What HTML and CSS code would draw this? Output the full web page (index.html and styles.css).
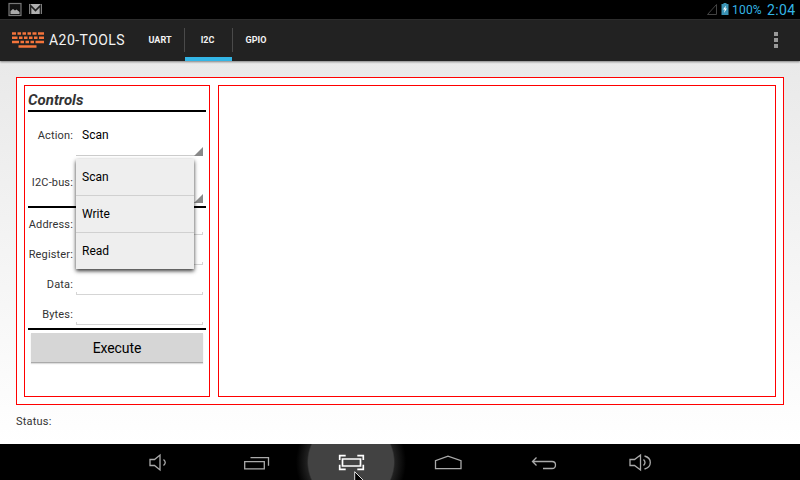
FILE: index.html
```html
<!DOCTYPE html>
<html lang="en">
<head>
<meta charset="utf-8">
<title>A20-TOOLS</title>
<link rel="stylesheet" href="styles.css">
</head>
<body>
<div class="screen">
  <header class="statusbar">
    <svg class="notif" width="44" height="19" viewBox="0 0 44 19">
      <rect x="2" y="3.500" width="12" height="12" fill="#111" stroke="#777" stroke-width="1.200"/>
      <path d="M3.500 14V11l2.500-2 2 1.500 1.500-1 3 2.500v2z" fill="#aaa"/>
      <rect x="22" y="4" width="13" height="10" fill="#b0b0b0"/>
      <path d="M23.500 14V5.500L28.500 10.500 33.500 5.500V14" fill="none" stroke="#222" stroke-width="1.700"/>
    </svg>
    <div class="sys">
      <svg width="24" height="19" viewBox="0 0 24 19">
        <path d="M1.500 14.500H10.500V4.500Z" fill="none" stroke="#444" stroke-width="1"/>
        <path d="M15.500 4h2V3h3v1h2v11h-7z" fill="#3a93b5"/>
        <path d="M20 5.500l-3 4h1.800l-.8 3.500 3-4.500h-1.700z" fill="#fff"/>
      </svg>
      <span class="battery">100%</span><span class="clock">2:04</span>
    </div>
  </header>
  <nav class="actionbar">
    <svg class="logo" width="32" height="17" viewBox="0 0 32 17">
      <g fill="none" stroke="#f4743b">
        <path stroke-width="2.500" d="M0 1.500H4M5.500 1.500H9M10.500 1.500H14M15.500 1.500H19M20.500 1.500H24.500M26 1.500H32"/>
        <path stroke-width="2.500" d="M0 5.700H5.500M7 5.700H10.500M12 5.700H15.500M17 5.700H20.500M22 5.700H25.500M27 5.700H32"/>
        <path stroke-width="2.500" d="M0 10H7M8.500 10H12M13.500 10H17M18.500 10H22M23.500 10H32"/>
        <path stroke-width="2.500" d="M6.500 14.500H24.500"/>
      </g>
    </svg>
    <span class="title">A20-TOOLS</span>
    <div class="tabs">
      <span class="tab">UART</span>
      <span class="tab active">I2C</span>
      <span class="tab">GPIO</span>
    </div>
    <div class="overflow"><i></i><i></i><i></i></div>
  </nav>
  <main class="content">
    <div class="frame">
      <section class="panel controls">
        <h1>Controls</h1>
        <div class="rule"></div>
        <div class="row tall">
          <label>Action:</label>
          <div class="spinner">Scan</div>
          <div class="menu">
            <div>Scan</div>
            <div>Write</div>
            <div>Read</div>
          </div>
        </div>
        <div class="row tall"><label>I2C-bus:</label><div class="spinner"></div></div>
        <div class="rule"></div>
        <div class="row"><label>Address:</label><div class="field"></div></div>
        <div class="row"><label>Register:</label><div class="field"></div></div>
        <div class="row"><label>Data:</label><div class="field"></div></div>
        <div class="row"><label>Bytes:</label><div class="field"></div></div>
        <div class="rule"></div>
        <button class="execute">Execute</button>
      </section>
      <section class="panel output"></section>
    </div>
    <div class="status">Status:</div>
  </main>
  <footer class="navbar">
    <div class="key"><svg width="40" height="36" viewBox="0 0 40 36"><path d="M10 15.500h4.500l5.500-4.500v15l-5.500-4.500H10zM23.500 15.500q3.500 3 0 6"/></svg></div>
    <div class="key"><svg width="40" height="36" viewBox="0 0 40 36"><path d="M8.700 17.700h19.600v7.100H8.700zM14.500 13.700h18v8"/></svg></div>
    <div class="key pressed"><svg width="40" height="36" viewBox="0 0 40 36"><path d="M10.500 15h18v7h-18zM7.700 16v-4.300h6M25.300 11.700h6V16M7.700 20.800v4.500h6M25.300 25.300h6v-4.500"/></svg></div>
    <div class="key"><svg width="40" height="36" viewBox="0 0 40 36"><path d="M7.500 24.700v-8l12.500-4.500 13 4.500v8z"/></svg></div>
    <div class="key"><svg width="40" height="36" viewBox="0 0 40 36"><path d="M12.500 13.500l-4 4 4 4M8.500 17.500h19.500q3.500 0 3.500 3.500t-3.500 3.500h-9"/></svg></div>
    <div class="key"><svg width="40" height="36" viewBox="0 0 40 36"><path d="M10 15.500h4.500l6-4.500v15l-6-4.500H10zM23.500 15.500q3 3 0 6M24.500 12q5.800 1.500 5.800 6.500t-5.800 6.500"/></svg></div>
  </footer>
  <svg class="pointer" width="13" height="9" viewBox="0 0 13 9"><path d="M.7 12V.7L12 12" fill="#000" stroke="#ddd" stroke-width="1"/></svg>
</div>
</body>
</html>
```
FILE: styles.css
```css
* { box-sizing: border-box; }
body { margin: 0; font-family: Roboto, "Liberation Sans", sans-serif; }
.screen {
  position: relative;
  width: 800px;
  height: 480px;
  display: flex;
  flex-direction: column;
  overflow: hidden;
}
svg { display: block; flex: none; }

.statusbar {
  height: 19px;
  background: #000;
  display: flex;
  justify-content: space-between;
  padding: 0 5px 0 7px;
}
.sys { display: flex; color: #33b5e5; line-height: 20px; }
.battery { font-size: 12px; width: 35px; margin-left: 2px; letter-spacing: .2px; }
.clock { font-size: 14px; width: 28px; letter-spacing: .4px; }

.actionbar {
  position: relative;
  height: 42px;
  background: #222;
  border-top: 1px solid #2d2d2d;
  box-shadow: 0 1px 2px rgba(0, 0, 0, .45);
  display: flex;
  align-items: center;
  padding: 0 21px 0 12px;
  color: #f3f3f3;
}
.title { font-size: 14px; width: 88px; margin-left: 5px; margin-top: -1px; letter-spacing: .45px; }
.tabs { display: flex; align-self: stretch; }
.tab {
  position: relative;
  width: 48px;
  display: flex;
  align-items: center;
  justify-content: center;
  padding: 0 2px 2px 0;
  font-size: 9px;
  font-weight: 700;
}
.tab + .tab::before {
  content: "";
  position: absolute;
  left: -1px;
  top: 8px;
  width: 1px;
  height: 24px;
  background: #4a4a4a;
}
.tab.active { box-shadow: inset 0 -4px #33b5e5; width: 47px; margin-right: 1px; }
.overflow { margin: -1px 0 0 auto; display: grid; gap: 2px; width: 6px; }
.overflow i { width: 4px; height: 4px; margin-left: 1px; background: #999; }

.content {
  flex: 1;
  background: linear-gradient(#e9e9e9, #fff);
  padding: 16px 16px 0;
}
.frame {
  height: 328px;
  border: 1px solid #f00;
  background: #fff;
  padding: 7px;
  display: flex;
  gap: 8px;
}
.panel { border: 1px solid #f00; }
.controls { width: 186px; padding: 0 3px; }
.output { flex: 1; }
h1 {
  margin: 0;
  height: 24px;
  line-height: 28px;
  font-size: 15px;
  font-weight: 700;
  font-style: italic;
  color: #333;
}
.rule { height: 2px; background: #000; }
.row { position: relative; height: 30px; display: flex; padding-right: 3px; }
.row.tall { height: 47px; }
label {
  width: 45px;
  margin-right: 3px;
  display: flex;
  align-items: center;
  justify-content: flex-end;
  white-space: nowrap;
  font-size: 11px;
  letter-spacing: .15px;
  color: #333;
  padding-top: 2px;
}
.row.tall label { padding-top: 0; }
.spinner {
  position: relative;
  flex: 1;
  height: 44px;
  border-bottom: 1px solid #ccc;
  padding-left: 6px;
  line-height: 46px;
  font-size: 12px;
  color: #000;
}
.spinner::after {
  content: "";
  position: absolute;
  right: 0;
  bottom: -1px;
  border-left: 9px solid transparent;
  border-bottom: 9px solid #888;
}
.field {
  flex: 1;
  align-self: flex-start;
  height: 3px;
  margin-top: 24px;
  border: 1px solid #d5d5d5;
  border-top: 0;
}
.menu {
  position: absolute;
  z-index: 2;
  left: 48px;
  top: 47px;
  width: 118px;
  height: 110px;
  background: #eee;
  box-shadow: 0 2px 4px rgba(0, 0, 0, .8);
  font-size: 12px;
  line-height: 36px;
}
.menu div { height: 37px; padding-left: 6px; border-bottom: 1px solid #d0d0d0; }
.menu div:last-child { height: 36px; border: 0; }
.execute {
  display: block;
  width: 172px;
  height: 30px;
  margin: 3px 0 0 3px;
  padding: 0;
  border: 0;
  border-bottom: 1px solid #aaa;
  box-shadow: 0 1px 1px #ddd;
  background: #d6d6d6;
  font: 14px Roboto, "Liberation Sans", sans-serif;
  letter-spacing: -.1px;
  color: #000;
}
.status { margin-top: 9px; font-size: 11px; line-height: 16px; letter-spacing: .2px; color: #333; }

.navbar {
  height: 36px;
  background: radial-gradient(circle at 351px 18px, #424242 42.500px, #202020 44px, #000 55px);
  display: flex;
  justify-content: center;
}
.key { width: 96px; display: flex; justify-content: center; }
.key path { fill: none; stroke: #aaa; stroke-width: 1.3; }
.pressed path { stroke: #fff; stroke-width: 1.7; }
.pointer { position: absolute; left: 354px; top: 471px; }
```
